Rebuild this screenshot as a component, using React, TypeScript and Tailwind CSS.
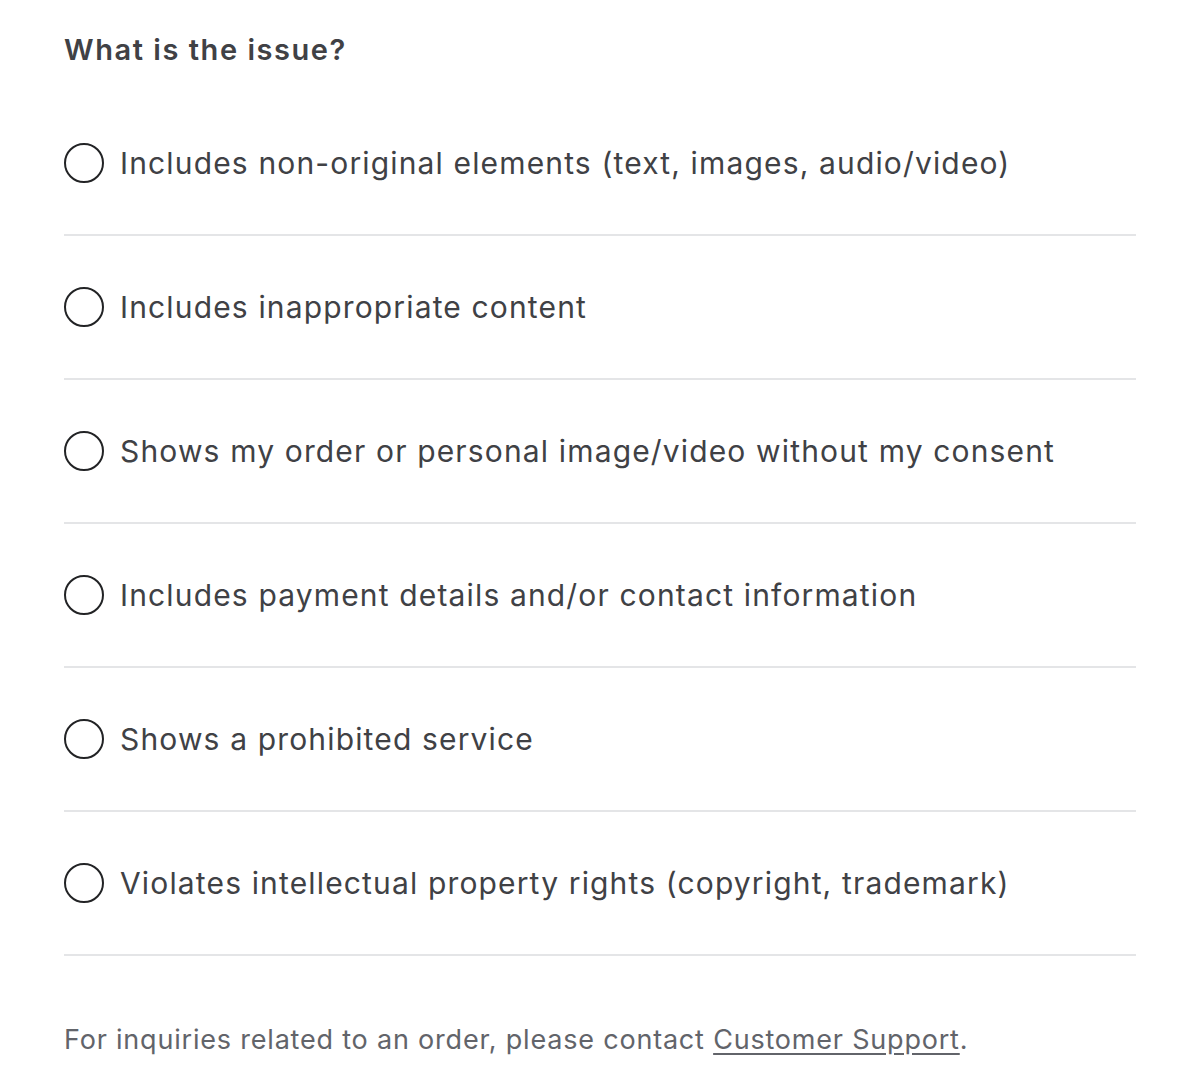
const options = [
  'Includes non-original elements (text, images, audio/video)',
  'Includes inappropriate content',
  'Shows my order or personal image/video without my consent',
  'Includes payment details and/or contact information',
  'Shows a prohibited service',
  'Violates intellectual property rights (copyright, trademark)',
];

export default function App() {
  return (
    <div
      className="bg-white px-16 pt-[30px] pb-[30px] text-[#404145]"
      style={{ fontFamily: 'Inter, "Liberation Sans", sans-serif' }}
    >
      <h2 className="text-[29px] font-semibold leading-[40px] tracking-[1.55px]">What is the issue?</h2>
      <div className="mt-[22px]">
        {options.map((label) => (
          <label
            key={label}
            className="flex h-[144px] cursor-pointer items-center gap-4 border-b-2 border-[#e4e5e7]"
          >
            <span className="h-10 w-10 shrink-0 rounded-full border-2 border-[#222325]" />
            <span className="text-[30px] leading-[40px] tracking-[1.15px]">{label}</span>
          </label>
        ))}
      </div>
      <p className="mt-[64px] text-[27px] leading-[40px] tracking-[0.8px] text-[#62646a]">
        For inquiries related to an order, please contact{' '}
        <a href="#" className="underline underline-offset-4">
          Customer Support
        </a>
        .
      </p>
    </div>
  );
}
